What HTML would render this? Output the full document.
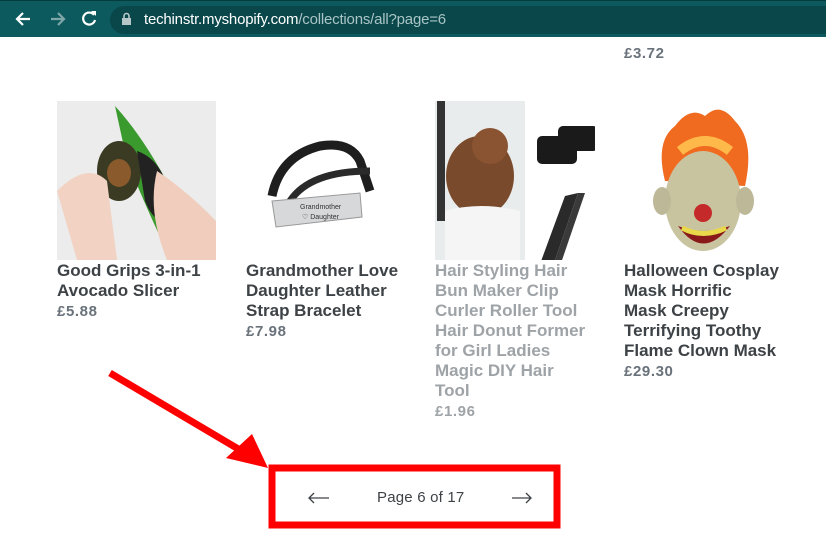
<!DOCTYPE html>
<html><head><meta charset="utf-8"><style>
*{margin:0;padding:0;box-sizing:border-box}
body{width:826px;height:547px;overflow:hidden;background:#fff;font-family:"Liberation Sans",sans-serif;position:relative}
.bar{position:absolute;left:0;top:0;width:826px;height:37px;background:#0c5a5d;border-top:1px solid #073c3f}
.pill{position:absolute;left:110px;top:5px;width:730px;height:28px;border-radius:14px;background:#0a474b}
.url{position:absolute;left:144px;top:10px;font-size:15px;color:#fff;letter-spacing:-0.2px}
.url span{color:#a9c4c5}
.t{position:absolute;font-weight:bold;font-size:17px;line-height:20px;color:#3d4246}
.p{position:absolute;font-weight:bold;font-size:15px;letter-spacing:0.6px;color:#69727b}
.g{color:#9ea3a7}
</style></head><body>
<div class="bar">
<svg width="110" height="37" style="position:absolute;left:0;top:0">
<path d="M30 18H18M23 12l-6 6 6 6" stroke="#fff" stroke-width="2.2" fill="none"/>
<path d="M51 18h12M58 12l6 6-6 6" stroke="#7fa6a8" stroke-width="2.2" fill="none"/>
<path d="M94 14a6 6 0 1 0 1 5" stroke="#fff" stroke-width="2.2" fill="none"/><path d="M91 10h5v5z" fill="#fff"/>
</svg>
<div class="pill"></div>
<svg width="12" height="14" style="position:absolute;left:121px;top:11px"><rect x="1" y="6" width="9" height="7" fill="#b7c7c8"/><path d="M3 6V4a2.5 2.5 0 0 1 5 0v2" stroke="#b7c7c8" stroke-width="1.6" fill="none"/></svg>
<div class="url">techinstr.myshopify.com<span>/collections/all?page=6</span></div>
</div>
<div class="p" style="left:624px;top:45px">£3.72</div>

<svg width="159" height="159" style="position:absolute;left:57px;top:101px">
<rect width="159" height="159" fill="#ececec"/>
<path d="M58 5 Q90 40 120 100 Q130 140 110 150 Q95 120 70 60Z" fill="#3a9a2e"/>
<ellipse cx="62" cy="70" rx="22" ry="30" fill="#3b3b24"/>
<ellipse cx="62" cy="72" rx="12" ry="14" fill="#8a5a2c"/>
<path d="M80 50 Q110 60 115 110 Q100 130 88 100Z" fill="#222"/>
<path d="M0 90 Q30 60 50 80 L60 159 H20Z" fill="#f2d3c3"/>
<path d="M100 70 Q130 90 159 120 V159 H110 Q90 110 100 70Z" fill="#f0cdbc"/>
</svg>
<svg width="128" height="159" style="position:absolute;left:260px;top:101px">
<path d="M12 95 Q20 55 60 45 Q90 40 100 60 L110 90" stroke="#1e1e1e" stroke-width="9" fill="none"/>
<path d="M30 100 Q50 70 110 70" stroke="#2a2a2a" stroke-width="7" fill="none"/>
<path d="M12 100 L100 92 L102 116 L16 126Z" fill="#d6d8da" stroke="#999"/>
<text x="40" y="108" font-size="7" fill="#333" font-family="Liberation Sans">Grandmother</text>
<text x="42" y="118" font-size="7" fill="#333" font-family="Liberation Sans">♡ Daughter</text>
</svg>
<svg width="160" height="159" style="position:absolute;left:435px;top:101px">
<rect width="90" height="159" fill="#e9ecec"/>
<rect x="2" width="8" height="120" fill="#333"/>
<ellipse cx="45" cy="75" rx="34" ry="40" fill="#7a4a2c"/>
<circle cx="55" cy="45" r="18" fill="#8a5432"/>
<path d="M10 110 Q45 100 85 110 V159 H10Z" fill="#f5f5f5"/>
<rect x="102" y="35" width="40" height="28" rx="5" fill="#1a1a1a"/>
<rect x="133" y="25" width="40" height="25" rx="5" fill="#1a1a1a" transform="translate(-10,0)"/>
<path d="M130 95 L143 92 L118 165 L105 163Z" fill="#2a2a2a"/>
<path d="M143 92 L150 92 L125 165 L118 165Z" fill="#3a3a3a"/>
</svg>
<svg width="110" height="159" style="position:absolute;left:650px;top:101px">
<path d="M15 80 Q5 40 25 25 Q40 5 55 15 Q70 0 85 20 Q105 40 95 85Z" fill="#f06a20"/>
<path d="M30 50 Q55 30 80 50" stroke="#ffb84a" stroke-width="10" fill="none"/>
<ellipse cx="53" cy="100" rx="38" ry="50" fill="#c8c4a0"/>
<ellipse cx="12" cy="100" rx="9" ry="14" fill="#bcb898"/><ellipse cx="95" cy="100" rx="9" ry="14" fill="#bcb898"/>
<circle cx="53" cy="112" r="9" fill="#c52a2a"/>
<path d="M28 125 Q53 160 80 125 Q53 135 28 125Z" fill="#8a1a1a"/>
<path d="M32 127 Q53 138 76 127" stroke="#e8d84a" stroke-width="5" fill="none"/>
</svg>

<div class="t" style="left:57px;top:261px">Good Grips 3-in-1<br>Avocado Slicer</div>
<div class="p" style="left:57px;top:303px">£5.88</div>
<div class="t" style="left:246px;top:261px">Grandmother Love<br>Daughter Leather<br>Strap Bracelet</div>
<div class="p" style="left:246px;top:323px">£7.98</div>
<div class="t g" style="left:435px;top:261px">Hair Styling Hair<br>Bun Maker Clip<br>Curler Roller Tool<br>Hair Donut Former<br>for Girl Ladies<br>Magic DIY Hair<br>Tool</div>
<div class="p g" style="left:435px;top:403px">£1.96</div>
<div class="t" style="left:624px;top:261px">Halloween Cosplay<br>Mask Horrific<br>Mask Creepy<br>Terrifying Toothy<br>Flame Clown Mask</div>
<div class="p" style="left:624px;top:363px">£29.30</div>

<svg width="826" height="547" style="position:absolute;left:0;top:0">
<line x1="110" y1="373" x2="240" y2="450" stroke="#f00" stroke-width="7"/>
<path d="M268 468 L226 458 L252 434Z" fill="#f00"/>
<rect x="272" y="468" width="285" height="57" fill="none" stroke="#f00" stroke-width="7"/>
<path d="M309 498H329M314 493l-5 5 5 5" stroke="#3d4246" stroke-width="1.3" fill="none"/>
<path d="M512 498H531M526 493l5 5-5 5" stroke="#3d4246" stroke-width="1.3" fill="none"/>
</svg>
<div style="position:absolute;left:377px;top:489px;font-size:15px;color:#3d4246;letter-spacing:0.2px">Page 6 of 17</div>
</body></html>
